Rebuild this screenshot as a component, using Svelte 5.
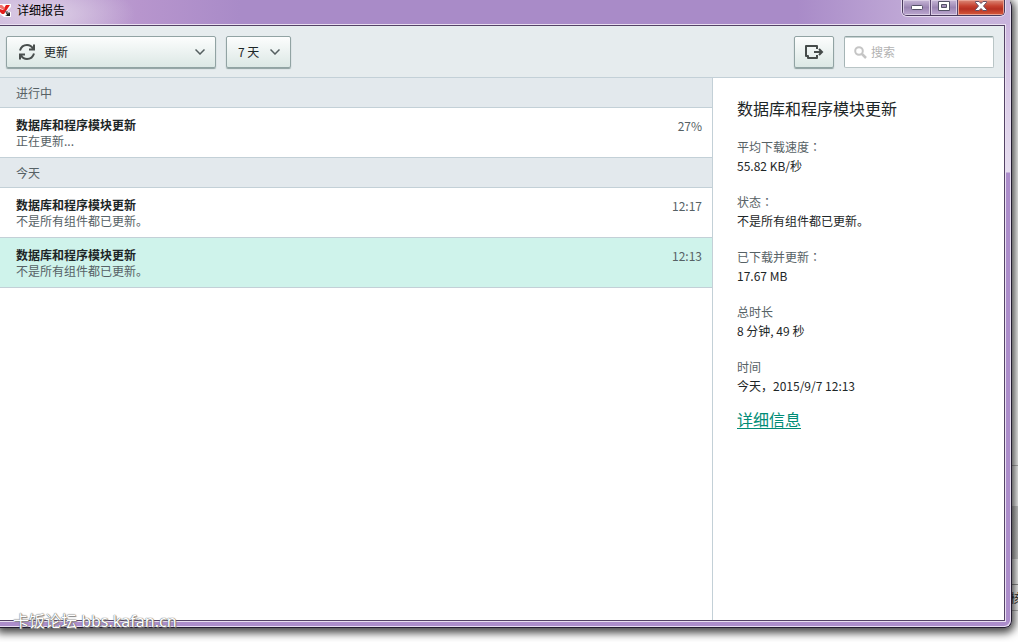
<script>
  let category = $state('update');
  let period = $state('7');
  let query = $state('');

  const groups = [
    { title: '进行中', items: [{ id: 1, name: '数据库和程序模块更新', note: '正在更新...', value: '27%' }] },
    {
      title: '今天',
      items: [
        { id: 2, name: '数据库和程序模块更新', note: '不是所有组件都已更新。', value: '12:17' },
        { id: 3, name: '数据库和程序模块更新', note: '不是所有组件都已更新。', value: '12:13' }
      ]
    }
  ];
  let selected = $state(3);

  const details = [
    { label: '平均下载速度', mark: '：', value: '55.82 KB/秒' },
    { label: '状态', mark: '：', value: '不是所有组件都已更新。' },
    { label: '已下载并更新', mark: '：', value: '17.67 MB' },
    { label: '总时长', mark: '', value: '8 分钟, 49 秒' },
    { label: '时间', mark: '', value: '今天，2015/9/7 12:13' }
  ];
</script>

<div class="desktop">
  <div class="window">
    <header class="titlebar">
      <svg class="logo" width="12" height="18" viewBox="0 0 12 18" aria-hidden="true">
        <path d="M0 4H11V7L7 11L11 12V17H4L0 14Z" fill="#fff" opacity=".95" />
        <path d="M6 5H10L4 14H2L0 12V9L3 10Z" fill="#e41d1c" />
        <path d="M0 5H2L5 8L4 10L0 8Z" fill="#f0706c" />
        <path d="M5 11H7L9 13L10 12V16H5L7 15Z" fill="#222" />
        <path d="M5 11H7L9 13L8 14Z" fill="#8c8c8c" />
      </svg>
      <h1>详细报告</h1>
      <div class="controls">
        <button aria-label="Minimize">
          <svg width="14" height="12" viewBox="0 0 14 12"><rect x="1.500" y="5.500" width="11" height="4" rx="1" fill="#fff" stroke="#535166" /></svg>
        </button>
        <button aria-label="Maximize">
          <svg width="14" height="12" viewBox="0 0 14 12"><path d="M1.500 1.500H12.500V10.500H1.500ZM4.500 4.500V7.500H9.500V4.500Z" fill="#fff" fill-rule="evenodd" stroke="#535166" /></svg>
        </button>
        <button class="close" aria-label="Close">
          <svg width="14" height="12" viewBox="0 0 14 12"><path d="M1.500 1.500H5L7 3.500L9 1.500H12.500V2.500L9.500 6L12.500 9.500V10.500H9L7 8.500L5 10.500H1.500V9.500L4.500 6L1.500 2.500Z" fill="#fff" stroke="#655064" /></svg>
        </button>
      </div>
    </header>

    <div class="client">
      <div class="toolbar">
        <label class="picker wide">
          <svg class="lead" width="18" height="18" viewBox="0 0 18 18" fill="none" stroke="#494f4e" stroke-width="2">
            <path d="M2 7.500C3 4 6 2 9 2C11.500 2 13.500 3 15 5.500M16 1.500V6.500H11" />
            <path d="M16 10.500C15 14 12 16 9 16C6.500 16 4.500 15 3 12.500M2 16.500V11.500H7" />
          </svg>
          <select bind:value={category} aria-label="类别">
            <option value="update">更新</option>
          </select>
          <svg class="arrow" width="10" height="6" viewBox="0 0 10 6" fill="none" stroke="#555f60" stroke-width="1.500"><path d="M.5 .5L5 5L9.500 .5" /></svg>
        </label>
        <label class="picker">
          <select bind:value={period} aria-label="时段">
            <option value="7">7 天</option>
          </select>
          <svg class="arrow" width="10" height="6" viewBox="0 0 10 6" fill="none" stroke="#555f60" stroke-width="1.500"><path d="M.5 .5L5 5L9.500 .5" /></svg>
        </label>
        <button class="export" aria-label="导出">
          <svg width="20" height="16" viewBox="0 0 20 16" fill="none" stroke="#454b4a" stroke-width="2">
            <path d="M13 5V2H2V12H4V14H13V11" stroke-linejoin="round" />
            <path d="M10 8H18M15 5L18 8L15 11" />
          </svg>
        </button>
        <label class="search">
          <svg width="13" height="13" viewBox="0 0 13 13" fill="none" stroke="#c5c5c5"><circle cx="5" cy="5" r="3.800" stroke-width="2" /><path d="M8 8L12 12" stroke-width="2.500" /></svg>
          <input type="text" bind:value={query} placeholder="搜索" aria-label="搜索" />
        </label>
      </div>

      <div class="body">
        <main>
          {#each groups as group}
            <section>
              <h2>{group.title}</h2>
              {#each group.items as item}
                <button class="row" class:active={selected === item.id} onclick={() => (selected = item.id)}>
                  <span class="text"><strong>{item.name}</strong><span>{item.note}</span></span>
                  <span class="value">{item.value}</span>
                </button>
              {/each}
            </section>
          {/each}
        </main>
        <aside>
          <h3>数据库和程序模块更新</h3>
          <dl>
            {#each details as d}
              <div>
                <dt>{d.label}<span class="mark">{d.mark}</span></dt>
                <dd>{d.value}</dd>
              </div>
            {/each}
          </dl>
          <a href="#details">详细信息</a>
        </aside>
      </div>
    </div>
  </div>
  <div class="behind"><span>核</span></div>
  <div class="watermark">卡饭论坛 bbs.kafan.cn</div>
</div>

<style>
  :global(body) { margin: 0; }
  .desktop, .desktop * { box-sizing: border-box; }
  .desktop {
    position: relative;
    display: flex;
    min-height: 100vh;
    padding: 0 6px 14px 0;
    overflow: hidden;
    background: #fff;
    color: #1d2627;
    font: 12px/16px "Noto Sans CJK SC", "Noto Sans", sans-serif;
  }
  button, select, input { font: inherit; color: inherit; margin: 0; }
  .window {
    position: relative;
    z-index: 1;
    flex: 1;
    min-width: 0;
    display: flex;
    flex-direction: column;
    padding: 0 4px 4px 0;
    border: solid #231c30;
    border-width: 0 1px 1px 0;
    border-radius: 0 6px 7px 0;
    background: linear-gradient(#c6addb 0, #dacbe7 90px, #e6ddef 172px, #ac8dcb 173px);
    box-shadow: inset -1px -1px #e6dcf0, 0 2px 9px 3px #000b;
  }
  .titlebar {
    display: flex;
    height: 25px;
    margin-right: -3px;
    padding-right: 5px;
    background:
      radial-gradient(ellipse 90px 34px at 45px 14px, #e4daebcc, #e4daeb00),
      linear-gradient(90deg, #c8b1d8, #b795cd 140px, #a98bc8 240px, #a98bc8 79%, #c4aed9 92%, #c8b4dc);
  }
  .logo { flex: none; }
  h1 { margin: 2px 0 0 5px; font-size: 12px; font-weight: 400; line-height: 16px; color: #000; }
  .controls {
    display: flex;
    margin-left: auto;
    height: 16px;
    border: solid #493a5c;
    border-width: 0 1px 1px;
    border-radius: 0 0 5px 5px;
    overflow: hidden;
    box-shadow: 0 0 0 1px #e5daee;
  }
  .controls button {
    display: flex;
    justify-content: center;
    width: 28px;
    padding: 0;
    border: 0;
    border-right: 1px solid #57466c;
    background: linear-gradient(#c7b7d7, #9b85b3 50%, #bda8d0);
    box-shadow: inset 0 0 0 1px #d9cce4;
  }
  .controls button:nth-child(2) { width: 27px; }
  .controls button.close {
    width: 46px;
    border: 0;
    background: linear-gradient(#dc8a79, #c64230 40%, #b63022 60%, #d75b3c);
    box-shadow: inset 0 0 0 1px #e9a293;
  }
  .client {
    flex: 1;
    display: flex;
    flex-direction: column;
    min-height: 0;
    margin: 0 2px 2px 0;
    border: solid #544366;
    border-width: 1px 1px 1px 0;
    outline: 1px solid #eae0f1;
    background: #fff;
  }
  .toolbar {
    display: flex;
    gap: 10px;
    height: 52px;
    padding: 10px 10px 9px 6px;
    background: #e6ecee;
    border-bottom: 1px solid #c3d0d7;
  }
  .picker, .export, .search {
    display: flex;
    align-items: center;
    height: 32px;
    border: 1px solid #91a3a3;
    border-radius: 2px;
  }
  .picker, .export {
    background: linear-gradient(#fcfdfd, #dce8e5);
    box-shadow: 0 1px 1px #8da09f;
  }
  .picker { position: relative; width: 65px; }
  .picker.wide { width: 210px; }
  .picker select {
    width: 100%;
    height: 100%;
    padding: 0 26px 0 11px;
    border: 0;
    appearance: none;
    background: none;
  }
  .picker.wide select { padding-left: 37px; }
  .lead { position: absolute; left: 11px; }
  .arrow { position: absolute; right: 10px; pointer-events: none; }
  .export { justify-content: center; width: 40px; margin-left: auto; padding: 0; }
  .search { width: 150px; gap: 4px; padding: 0 9px; background: #fff; border-color: #91a3a3 #b9c5c6 #b9c5c6 #a5b4b5; box-shadow: inset 0 1px #c7d3d3; }
  .search svg { flex: none; }
  .search input { flex: 1; min-width: 0; padding: 0; border: 0; outline: 0; background: none; }
  .search input::placeholder { color: #b2b2b2; opacity: 1; }
  .body { flex: 1; display: flex; }
  main { flex: 1; min-width: 0; }
  h2 {
    height: 30px;
    margin: 0;
    padding: 0 16px;
    border-bottom: 1px solid #c3d0d7;
    background: #e3e9ed;
    color: #566165;
    font-size: 12px;
    font-weight: 400;
    line-height: 30px;
  }
  .row {
    display: flex;
    justify-content: space-between;
    width: 100%;
    height: 50px;
    padding: 9px 10px 8px 16px;
    border: 0;
    border-bottom: 1px solid #c3d0d7;
    background: #fff;
    text-align: left;
  }
  .row.active { background: #cff3eb; }
  .text { display: flex; flex-direction: column; color: #566165; }
  .text strong { color: #1d2627; font-weight: 700; }
  .value { color: #566165; line-height: 18px; }
  aside { width: 292px; padding: 20px 24px; border-left: 1px solid #c3d0d7; }
  h3 { margin: 0 0 19px; font-size: 16px; font-weight: 400; line-height: 20px; }
  dl { display: flex; flex-direction: column; gap: 17px; margin: 0; }
  dt { color: #566165; line-height: 19px; }
  dd { margin: 0; line-height: 19px; }
  .mark { font-family: "Noto Sans CJK TC", sans-serif; }
  a { display: inline-block; margin-top: 13px; color: #008c76; font-size: 16px; line-height: 22px; text-underline-offset: 2px; }
  .behind {
    position: absolute;
    right: 0;
    top: 465px;
    width: 6px;
    height: 146px;
    overflow: hidden;
    border: solid #0004;
    border-width: 1px 0;
    background: linear-gradient(#0000 40px, #5554 40px, #5554 93px, #0000 93px, #0000 118px, #0006 118px, #0006 119px, #0000 119px);
  }
  .behind span { position: absolute; left: -2px; top: 124px; color: #333; }
  .watermark {
    position: absolute;
    z-index: 2;
    left: 13px;
    bottom: 11px;
    color: #fff;
    font-family: "Noto Sans", "Noto Sans CJK SC", sans-serif;
    font-size: 16px;
    line-height: 20px;
    text-shadow: 0 0 1px #555, 0 0 1px #777, 1px 1px 1px #888;
  }
</style>
